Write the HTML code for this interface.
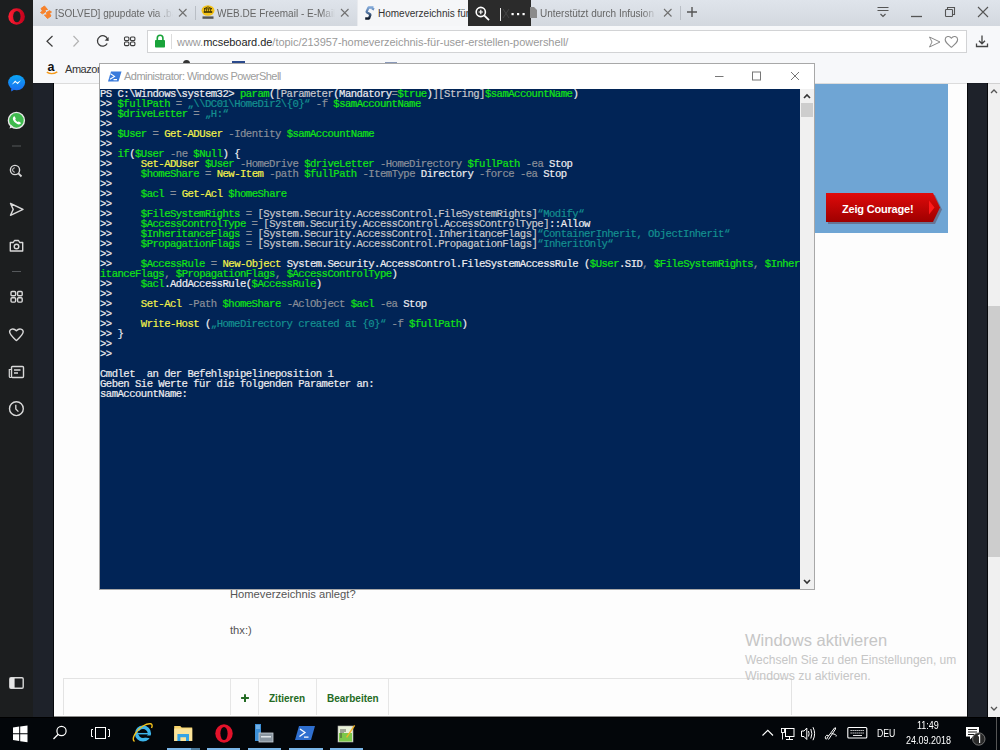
<!DOCTYPE html>
<html><head><meta charset="utf-8">
<style>
*{margin:0;padding:0;box-sizing:border-box}
html,body{width:1000px;height:750px;overflow:hidden;background:#fdfdfd;font-family:"Liberation Sans",sans-serif}
.a{position:absolute}
svg{position:absolute;overflow:visible}
#side{left:0;top:0;width:33px;height:717px;background:#1c1e1f}
#tabs{left:33px;top:0;width:967px;height:26px;background:linear-gradient(#dfe4eb,#d3d8df)}
#toolbar{left:33px;top:26px;width:967px;height:57px;background:#f7f8fa}
#addr{left:147px;top:30px;width:820px;height:23px;background:#fff;border:1px solid #d2d3d5}
.tt{position:absolute;font-size:10px;color:#666;white-space:nowrap;overflow:hidden;top:8px;line-height:12px}
#page{left:54px;top:83px;width:913px;height:634px;background:#fdfdfd}
#stripL{left:33px;top:83px;width:21px;height:634px;background:#1e222a;border-right:1px solid #07090c}
#stripR{left:967px;top:83px;width:21px;height:634px;background:#1e222a;border-left:1px solid #07090c;border-right:1px solid #07090c}
#vscroll{left:988px;top:83px;width:12px;height:634px;background:#f0f0f0}
#taskbar{left:0;top:717px;width:1000px;height:33px;background:linear-gradient(#000 0,#000 1px,#03060a 1px)}
#ps{left:99px;top:63px;width:716px;height:527px;border:1px solid #a8a8a8;background:#fff}
#con{left:0;top:25px;width:700px;height:500px;background:#012456;overflow:hidden}
.ln{position:absolute;left:0;white-space:pre;font-family:"Liberation Mono",monospace;font-size:10.6px;letter-spacing:-0.527px;line-height:10px;-webkit-text-stroke:0.2px currentColor;height:10px;color:#eeedf0}
.g{color:#13e413}.y{color:#f2f24a}.d{color:#8a8f99}.c{color:#149090}.t{color:#c8c8cc}
.btn{position:absolute;top:693px;font-size:10px;font-weight:bold;color:#246b24;line-height:12px}
.wm{position:absolute;left:745px;color:#c6c6c6;white-space:nowrap}
.tray{position:absolute;color:#fff;font-size:10px;white-space:nowrap;line-height:10px}
</style></head><body>
<!-- Opera sidebar -->
<div id="side" class="a"></div>
<svg width="33" height="717" style="left:0;top:0">
  <!-- opera logo -->
  <defs><linearGradient id="og" x1="0" y1="0" x2="1" y2="0"><stop offset="0" stop-color="#ff1f33"/><stop offset="1" stop-color="#c2001b"/></linearGradient></defs>
  <ellipse cx="16.6" cy="16.5" rx="8.3" ry="8.3" fill="url(#og)"/>
  <ellipse cx="16.85" cy="16.6" rx="3.7" ry="5.7" fill="#1c1e1f"/>
  <!-- messenger -->
  <defs><linearGradient id="mg" x1="0" y1="0" x2="0" y2="1"><stop offset="0" stop-color="#0aa6f6"/><stop offset="1" stop-color="#1a6ff0"/></linearGradient></defs>
  <ellipse cx="16.6" cy="82.6" rx="8.5" ry="7.6" fill="url(#mg)"/>
  <path d="M11 88.5 L11.3 91.6 L14.5 89.6Z" fill="#1a6ff0"/>
  <path d="M11.6 84.8 L15.2 80.6 L17.2 82.6 L21 80.2 L17.6 84.2 L15.6 82.3Z" fill="#fff"/>
  <!-- whatsapp -->
  <circle cx="16.4" cy="120.4" r="8" fill="#3fba4e" stroke="#e9e9e9" stroke-width="1.4"/>
  <path d="M9.5 128.6 L10.8 124.5 L13.5 127Z" fill="#e9e9e9"/>
  <path d="M13.5 116.8 q0.8 -1 1.4 0 l0.8 1.6 q0.2 0.6 -0.5 1.1 q0.8 1.8 2.6 2.6 q0.5 -0.7 1.1 -0.5 l1.6 0.8 q1 0.6 0 1.4 q-1.6 1.4 -4 -0.2 q-2.4 -1.6 -3.4 -3.6 q-0.8 -1.8 0.4 -3.2Z" fill="#fff"/>
  <!-- separators -->
  <rect x="12" y="145.5" width="9" height="1" fill="#55585b"/>
  <rect x="12" y="271" width="9" height="1" fill="#55585b"/>
  <g fill="none" stroke="#d9d9d9" stroke-width="1.4">
    <!-- search -->
    <circle cx="15" cy="170" r="4.6"/>
    <path d="M18.4 173.4 L21.5 176.5" stroke-width="1.8"/>
    <path d="M14.8 167.8 a2.2 2.2 0 0 0 0 4.4" stroke-width="1"/>
    <!-- send -->
    <path d="M10.5 203.5 L23 209.4 L10.5 215.3 L13.2 209.4Z" stroke-linejoin="round"/>
    <!-- camera -->
    <path d="M10.3 242.5 h3 l1.2 -2 h4 l1.2 2 h3 v8.5 h-12.4Z" stroke-linejoin="round"/>
    <circle cx="16.5" cy="246.5" r="2.3"/>
    <!-- grid -->
    <rect x="11" y="291.5" width="4.6" height="4.3" rx="1"/>
    <rect x="17.6" y="291.5" width="4.6" height="4.3" rx="1"/>
    <rect x="11" y="297.8" width="4.6" height="4.3" rx="1"/>
    <rect x="17.6" y="297.8" width="4.6" height="4.3" rx="1"/>
    <!-- heart -->
    <path d="M16.4 340.6 C12 336.5 9.6 334.5 9.6 331.8 C9.6 329.2 13.5 327.6 16.4 330.8 C19.3 327.6 23.2 329.2 23.2 331.8 C23.2 334.5 20.8 336.5 16.4 340.6Z" stroke-linejoin="round"/>
    <!-- news -->
    <rect x="11.5" y="366.5" width="12" height="11" rx="1"/>
    <path d="M11.5 369.5 h-2.2 v7 q0 1 1 1 h1.2" stroke-width="1.2"/>
    <path d="M14 370 h6.5 M14 373 h4" stroke-width="1.5"/>
    <!-- clock -->
    <circle cx="16.4" cy="408.7" r="6.9"/>
    <path d="M15.8 404.8 v4.2 l2.6 2.6" stroke-width="1.3"/>
    <!-- sidebar toggle -->
    <rect x="9.8" y="677.8" width="13.4" height="10.4" rx="1.2"/>
  </g>
  <rect x="10" y="678" width="4.6" height="10" fill="#e6e6e6"/>
</svg>

<!-- Tab strip -->
<div id="tabs" class="a"></div>
<!-- tab1 -->
<svg width="16" height="18" style="left:38px;top:3px">
  <path d="M3 5.5 L6.5 3 L9.5 6.5 L7 6.5 L7.5 9 L4.5 10.8 L2.5 9.5 L4.5 8Z" fill="#f7822b" stroke="#f7822b" stroke-width="1" stroke-linejoin="round"/>
  <path d="M13 13 L9.5 15.5 L6.5 12 L9 12 L8.5 9.5 L11.5 7.7 L13.5 9 L11.5 10.5Z" fill="#f7822b" stroke="#f7822b" stroke-width="1" stroke-linejoin="round"/>
</svg>
<div class="tt" style="left:55px;width:118px;-webkit-mask-image:linear-gradient(90deg,#000 85%,transparent)">[SOLVED] gpupdate via .bat</div>
<svg width="10" height="10" style="left:178px;top:8px"><path d="M1 1 L8.5 8.5 M8.5 1 L1 8.5" stroke="#707070" stroke-width="1.1"/></svg>
<div class="a" style="left:195px;top:6px;width:1px;height:14px;background:#b9bec5"></div>
<!-- tab2 -->
<svg width="14" height="14" style="left:201px;top:5px">
  <ellipse cx="7" cy="5.5" rx="6.5" ry="5.2" fill="#f4c318"/>
  <path d="M3 7.5 h8 v-1 h-8Z M3.6 3.6 v3 M5.6 3.6 v3 M7.6 3.6 v3 M9.6 3.6 v3 M3 3.8 L7 1.8 L11 3.8Z" stroke="#3a3000" stroke-width="0.8" fill="none"/>
  <rect x="1.5" y="11.4" width="11" height="2.4" fill="#333" opacity="0.8"/>
</svg>
<div class="tt" style="left:217px;width:118px;-webkit-mask-image:linear-gradient(90deg,#000 88%,transparent)">WEB.DE Freemail - E-Mail</div>
<svg width="10" height="10" style="left:340px;top:8px"><path d="M1 1 L8.5 8.5 M8.5 1 L1 8.5" stroke="#707070" stroke-width="1.1"/></svg>
<!-- active tab3 -->
<div class="a" style="left:357px;top:0;width:174px;height:27px;background:#f5f6f8;border-left:1px solid #e8eaee"></div>
<svg width="14" height="18" style="left:362px;top:3px">
  <defs><linearGradient id="sg" x1="0" y1="0" x2="0" y2="1"><stop offset="0" stop-color="#7fa6d6"/><stop offset="0.5" stop-color="#4d6f9a"/><stop offset="1" stop-color="#0f1a2a"/></linearGradient></defs>
  <path d="M11.5 4.5 L6.5 4.5 L4.5 9 L8.5 11.5 L7 15.5 L3.2 15.5 M11.5 4.5 L10.6 7" stroke="url(#sg)" stroke-width="2.3" fill="none" stroke-linejoin="bevel"/>
</svg>
<div class="tt" style="left:378px;width:95px;color:#333">Homeverzeichnis für</div>
<!-- dark zoom popup -->
<div class="a" style="left:468px;top:0;width:63px;height:27px;background:#2b2b2b"></div>
<svg width="63" height="27" style="left:468px;top:0">
  <circle cx="12.8" cy="12" r="4.6" fill="none" stroke="#fff" stroke-width="1.6"/>
  <path d="M16.2 15.4 L21 20.2" stroke="#fff" stroke-width="1.8"/>
  <path d="M12.8 9.8 v4.4 M10.6 12 h4.4" stroke="#fff" stroke-width="1.2"/>
  <rect x="32" y="8" width="1" height="13" fill="#e8e8e8"/>
  <path d="M35 9 L41 18 M41 9 L35 18" stroke="#444" stroke-width="1"/>
  <rect x="43.5" y="13" width="2.2" height="2.2" fill="#fff"/>
  <rect x="49" y="13" width="2.2" height="2.2" fill="#fff"/>
  <rect x="54.5" y="13" width="2.2" height="2.2" fill="#fff"/>
</svg>
<!-- tab4 -->
<svg width="8" height="12" style="left:530px;top:7px"><path d="M0 0 h4 l3 3 v8 h-7Z" fill="#8a8a8a"/></svg>
<div class="tt" style="left:540px;width:117px;-webkit-mask-image:linear-gradient(90deg,#000 88%,transparent)">Unterstützt durch Infusion</div>
<svg width="10" height="10" style="left:663px;top:8px"><path d="M1 1 L8.5 8.5 M8.5 1 L1 8.5" stroke="#707070" stroke-width="1.1"/></svg>
<div class="a" style="left:680px;top:6px;width:1px;height:14px;background:#b9bec5"></div>
<svg width="12" height="12" style="left:686px;top:6px"><path d="M6 1 v10 M1 6 h10" stroke="#555" stroke-width="1.4"/></svg>
<!-- window controls -->
<svg width="123" height="26" style="left:877px;top:0">
  <path d="M0.5 7.5 h11 M0.5 10.5 h11 M3.5 14 L6 16.5 L8.5 14" stroke="#555" stroke-width="1.2" fill="none"/>
  <path d="M34 16.5 h11" stroke="#555" stroke-width="1.3"/>
  <rect x="68.5" y="9.5" width="7" height="7" rx="0.8" fill="none" stroke="#555" stroke-width="1.1"/>
  <path d="M70.5 9.5 v-2 h7 v7 h-2" fill="none" stroke="#555" stroke-width="1.1"/>
  <path d="M101 7 L111 17 M111 7 L101 17" stroke="#555" stroke-width="1.1"/>
</svg>

<!-- Toolbar -->
<div id="toolbar" class="a"></div>
<svg width="110" height="26" style="left:36px;top:28px">
  <path d="M16.5 8 L11 13.2 L16.5 18.5" stroke="#3c3c3c" stroke-width="1.2" fill="none"/>
  <path d="M37.5 8 L42.5 13.2 L37.5 18.5" stroke="#b2b2b2" stroke-width="1.2" fill="none"/>
  <path d="M71.5 11 A5.2 5.2 0 1 0 71.2 15.5" stroke="#3c3c3c" stroke-width="1.3" fill="none"/>
  <path d="M72.6 9 L72.6 13 L68.6 12.4Z" fill="#3c3c3c"/>
  <rect x="88.5" y="9" width="4.4" height="3.6" rx="1" fill="none" stroke="#3c3c3c" stroke-width="1.1"/>
  <rect x="94.5" y="9" width="4.4" height="3.6" rx="1" fill="none" stroke="#3c3c3c" stroke-width="1.1"/>
  <rect x="88.5" y="14" width="4.4" height="3.6" rx="1" fill="none" stroke="#3c3c3c" stroke-width="1.1"/>
  <rect x="94.5" y="14" width="4.4" height="3.6" rx="1" fill="none" stroke="#3c3c3c" stroke-width="1.1"/>
</svg>
<div id="addr" class="a"></div>
<svg width="30" height="20" style="left:150px;top:33px">
  <path d="M7.3 7 v-2 a2.8 2.8 0 0 1 5.6 0 v2" stroke="#19a33a" stroke-width="1.6" fill="none"/>
  <rect x="5" y="7" width="10" height="7.6" rx="0.8" fill="#19a33a"/>
  <rect x="21" y="1" width="1" height="15" fill="#dcdcdc"/>
</svg>
<div class="a" style="left:177px;top:35px;font-size:11px;letter-spacing:-0.04px;color:#9a9a9a;white-space:nowrap;line-height:14px">www.<span style="color:#1e1e1e">mcseboard.de</span>/topic/213957-homeverzeichnis-für-user-erstellen-powershell/</div>
<svg width="40" height="20" style="left:927px;top:33px">
  <path d="M2.5 4 L13 9 L2.5 14 L5 9Z" stroke="#8a8a8a" stroke-width="1" fill="none" stroke-linejoin="round"/>
  <path d="M24.4 14.3 C20 10.5 18 9 18.2 6.2 C18.4 3.4 22.5 2.2 24.4 5.2 C26.3 2.2 30.4 3.4 30.6 6.2 C30.8 9 28.8 10.5 24.4 14.3Z" stroke="#8a8a8a" stroke-width="1.1" fill="none" stroke-linejoin="round"/>
</svg>
<svg width="16" height="16" style="left:975px;top:34px">
  <path d="M7 1.5 v8 M4 6.8 L7 9.8 L10 6.8 M1.5 9.5 v3 h11 v-3" stroke="#444" stroke-width="1.3" fill="none"/>
</svg>
<!-- bookmarks -->
<svg width="16" height="16" style="left:45px;top:61px">
  <text x="2.6" y="10" font-family="Liberation Sans" font-weight="bold" font-size="12.5" fill="#111">a</text>
  <path d="M1.8 11.2 q5 3 10.5 -0.3" stroke="#f59b1b" stroke-width="1.4" fill="none"/>
</svg>
<div class="a" style="left:65px;top:62px;font-size:11px;letter-spacing:-0.45px;color:#333;line-height:14px">Amazon</div>
<div class="a" style="left:183px;top:60px;width:7px;height:4px;border-radius:4px 4px 0 0;background:#333"></div>
<div class="a" style="left:232px;top:61px;width:13px;height:3px;background:#2b4a8c"></div>
<div class="a" style="left:385px;top:62px;width:12px;height:2px;background:#8a99b8"></div>

<!-- page -->
<div id="stripL" class="a"></div>
<div id="page" class="a"></div>
<div id="stripR" class="a"></div>
<div id="vscroll" class="a"></div>
<svg width="12" height="634" style="left:988px;top:83px">
  <path d="M3 10 L6 7 L9 10" stroke="#555" stroke-width="1.3" fill="none"/>
  <rect x="0" y="223" width="12" height="251" fill="#cdcdcd"/>
  <path d="M3 624 L6 627 L9 624" stroke="#555" stroke-width="1.3" fill="none"/>
</svg>
<div class="a" style="left:815px;top:84px;width:133px;height:149px;background:#6fa5d4"></div>
<div class="a" style="left:33px;top:83px;width:967px;height:1px;background:rgba(0,0,0,0.13)"></div>
<svg width="120" height="34" style="left:824px;top:192px">
  <defs><linearGradient id="rg" x1="0" y1="0" x2="0" y2="1"><stop offset="0" stop-color="#e00a0a"/><stop offset="1" stop-color="#9e0000"/></linearGradient></defs>
  <path d="M3 1 H110 L117 15.5 L110 30 H3Z" fill="#5a1a1a" opacity="0.35" transform="translate(1,2)"/>
  <path d="M2 1 H109 L116 15.5 L109 30 H2Z" fill="url(#rg)"/>
  <path d="M105 8.5 L110.5 15.5 L105 22.5Z" fill="#ff1a1a"/>
</svg>
<div class="a" style="left:842px;top:201.5px;font-size:11px;font-weight:bold;color:#fff;letter-spacing:-0.2px;line-height:14px">Zeig Courage!</div>

<div class="a" style="left:230px;top:587.6px;font-size:11.2px;color:#555;line-height:12px">Homeverzeichnis anlegt?</div>
<div class="a" style="left:230px;top:623.9px;font-size:11.2px;color:#555;line-height:12px">thx:)</div>

<div class="a" style="left:63px;top:678px;width:729px;height:40px;border:1px solid #e3e3e3;border-bottom:none"></div>
<div class="a" style="left:230px;top:679px;width:1px;height:38px;background:#e6e6e6"></div>
<div class="a" style="left:258px;top:679px;width:1px;height:38px;background:#e6e6e6"></div>
<div class="a" style="left:316px;top:679px;width:1px;height:38px;background:#e6e6e6"></div>
<div class="a" style="left:388px;top:679px;width:1px;height:38px;background:#e6e6e6"></div>
<svg width="10" height="10" style="left:240px;top:693px"><path d="M5 1.2 v7.8 M1.1 5.1 h7.8" stroke="#246b24" stroke-width="2"/></svg>
<div class="btn" style="left:269px">Zitieren</div>
<div class="btn" style="left:327px">Bearbeiten</div>

<div class="wm" style="top:630px;font-size:16.5px;line-height:20px">Windows aktivieren</div>
<div class="wm" style="top:652.6px;font-size:12px;line-height:14px">Wechseln Sie zu den Einstellungen, um</div>
<div class="wm" style="top:668.7px;font-size:12.3px;line-height:14px">Windows zu aktivieren.</div>

<!-- taskbar -->
<div class="a" style="left:54px;top:715px;width:913px;height:1px;background:#fff"></div>
<div class="a" style="left:54px;top:716px;width:913px;height:1px;background:#8c8c8c"></div>
<div id="taskbar" class="a"></div>
<svg width="1000" height="33" style="left:0;top:717px">
  <!-- windows logo -->
  <path d="M13 10.5 L19.2 9.6 V16.3 H13Z M20.2 9.4 L27.5 8.4 V16.3 H20.2Z M13 17.3 H19.2 V24 L13 23.1Z M20.2 17.3 H27.5 V25.2 L20.2 24.2Z" fill="#fff"/>
  <!-- search -->
  <circle cx="61.5" cy="14" r="4.6" fill="none" stroke="#fff" stroke-width="1.2"/>
  <path d="M58.2 17.3 L53.5 22" stroke="#fff" stroke-width="1.3"/>
  <!-- task view -->
  <rect x="95.5" y="10.5" width="10" height="11" fill="none" stroke="#fff" stroke-width="1"/>
  <path d="M93 12.5 h-1.5 v7 h1.5 M108 12.5 h1.5 v7 h-1.5" stroke="#fff" stroke-width="1" fill="none"/>
  <!-- IE -->
  <circle cx="143" cy="16.5" r="6.3" fill="none" stroke="#3cb4ea" stroke-width="3.6"/>
  <rect x="138" y="15.6" width="10" height="2" fill="#03060a"/>
  <rect x="137" y="15.8" width="12" height="1.6" fill="#3cb4ea"/>
  <rect x="137.6" y="14.2" width="9.5" height="1.6" fill="#03060a"/>
  <path d="M145 18.5 L151.5 18.5 L151.5 21.5 L145 20.5Z" fill="#03060a"/>
  <path d="M134.5 24.5 C131 22 136 13 143 9 C149 5.5 154 6 151.5 11" stroke="#f3c01a" stroke-width="1.4" fill="none"/>
  <!-- folder -->
  <path d="M174.2 9 h6 l1.5 1.5 h10.5 v13.5 h-18Z" fill="#f7d36b"/>
  <rect x="174.2" y="11.5" width="18" height="12.5" fill="#fbe39a"/>
  <path d="M177.4 17 h11.6 v7 h-3 v-3.8 h-5.6 v3.8 h-3Z" fill="#35a4e6"/>
  <!-- opera -->
  <ellipse cx="224" cy="16.5" rx="8.7" ry="9.2" fill="#e2122a"/>
  <ellipse cx="224" cy="16.5" rx="3.6" ry="6.6" fill="#03060a"/>
  <!-- server manager -->
  <rect x="255" y="7" width="6" height="17" fill="#3d8fd6"/>
  <path d="M256 9 h4 M256 11 h4" stroke="#bfe0ff" stroke-width="0.8"/>
  <rect x="259" y="16" width="14" height="9" fill="#8a96a0" stroke="#c8d0d8" stroke-width="0.8"/>
  <rect x="261" y="19" width="10" height="1.5" fill="#e0e6ea"/>
  <!-- powershell -->
  <path d="M299 9 H315 L311 23 H295Z" fill="#2f6fcf"/>
  <path d="M300 12 L305 15.5 L299.5 19.5 M304 20.2 H308.5" stroke="#fff" stroke-width="1.3" fill="none"/>
  <!-- notepad++ -->
  <rect x="338" y="9" width="15" height="16" fill="#e8f0d8" stroke="#aaa" stroke-width="0.6"/>
  <rect x="339" y="16" width="13" height="8.5" fill="#7cc84a"/>
  <path d="M341 12 v9 M343 12 v4 M345 12 v3" stroke="#333" stroke-width="0.8"/>
  <path d="M346 20 L354 8 l1.2 0.8 L347.2 20.8Z" fill="#f2b32a"/>
  <!-- running underlines -->
  <rect x="167" y="31" width="33" height="2" fill="#7ab6e8"/>
  <rect x="191" y="31" width="9" height="2" fill="#4d7c9e"/>
  <rect x="207" y="31" width="33" height="2" fill="#7ab6e8"/>
  <rect x="248" y="31" width="33" height="2" fill="#7ab6e8"/>
  <rect x="289" y="31" width="34" height="2" fill="#7ab6e8"/>
  <rect x="330" y="31" width="33" height="2" fill="#7ab6e8"/>
  <!-- tray -->
  <path d="M762.5 18.5 L767.8 13.3 L773 18.5" stroke="#fff" stroke-width="1.1" fill="none"/>
  <rect x="785.5" y="11.5" width="8.5" height="8" fill="none" stroke="#fff" stroke-width="1"/>
  <path d="M789.5 20 v2 M786 22.5 h7" stroke="#fff" stroke-width="1"/>
  <rect x="781.5" y="11.5" width="3" height="4" fill="none" stroke="#fff" stroke-width="0.9"/>
  <path d="M782.5 15.5 v7" stroke="#fff" stroke-width="0.9"/>
  <path d="M801.5 14 h2.5 l2.8 -3 v11.5 l-2.8 -3 h-2.5Z" fill="none" stroke="#fff" stroke-width="1"/>
  <path d="M808.5 14 q1.2 2.8 0 5.5 M810.8 12 q2.2 4.8 0 9.5 M813 10.2 q3.2 6.5 0 13" stroke="#fff" stroke-width="1" fill="none"/>
  <path d="M827 21 L834.5 11 q1.5 -1 1 1 L828.5 22.5" stroke="#fff" stroke-width="1" fill="none"/>
  <path d="M827.5 21.5 q-3 1.5 -2 -2 q1 -2 3 -1 M831.5 16.5 q6 1 4.5 3" stroke="#fff" stroke-width="1" fill="none"/>
  <rect x="847.8" y="10.5" width="19" height="10.5" rx="1" fill="none" stroke="#fff" stroke-width="1.1"/>
  <path d="M850.5 13.5 h14 M850.5 16 h14" stroke="#fff" stroke-width="0.9" stroke-dasharray="1.3 0.7"/>
  <path d="M853 18.5 h9" stroke="#fff" stroke-width="0.9"/>
  <!-- notification -->
  <path d="M966 10 h13 v9.5 h-6 l-3 3 v-3 h-4Z" fill="#fff"/>
  <path d="M968 12.5 h9 M968 15 h9 M968 17.5 h6" stroke="#060606" stroke-width="0.9"/>
  <circle cx="978.8" cy="22" r="6.2" fill="#2a2a2a" stroke="#888" stroke-width="0.8"/>
  <path d="M978 19 l1.6 -1 v8" stroke="#fff" stroke-width="1.2" fill="none"/>
  <rect x="996" y="0" width="1" height="33" fill="#555"/>
</svg>
<div class="tray" style="left:877px;top:728.8px;font-size:10px;transform:scaleX(0.87);transform-origin:0 0">DEU</div>
<div class="tray" style="left:917.4px;top:721.4px;font-size:10px;transform:scaleX(0.9);transform-origin:0 0">11:49</div>
<div class="tray" style="left:906px;top:736.3px;font-size:10px;transform:scaleX(0.897);transform-origin:0 0">24.09.2018</div>

<!-- PowerShell window -->
<div id="ps" class="a">
  <svg width="16" height="14" style="left:7px;top:7px">
    <path d="M4 0.5 H14.5 L11.5 10.5 H1Z" fill="#3a7bdc"/>
    <path d="M3.5 2.8 L7.5 5.4 L3 8.2 M6.5 8.6 H10" stroke="#fff" stroke-width="1.1" fill="none"/>
  </svg>
  <div class="a" style="left:24px;top:5px;font-size:11px;letter-spacing:-0.53px;color:#9d9d9d;line-height:14px;white-space:nowrap">Administrator: Windows PowerShell</div>
  <svg width="110" height="24" style="left:600px;top:0">
    <path d="M15 12.5 h8.5" stroke="#777" stroke-width="1"/>
    <rect x="52.5" y="8" width="8" height="8" fill="none" stroke="#777" stroke-width="1"/>
    <path d="M91 8 L99 16 M99 8 L91 16" stroke="#777" stroke-width="1"/>
  </svg>
  <div id="con" class="a">
<div class="ln" style="top:0px">PS C:\Windows\system32&gt; <span class="g">param</span>(<span class="t">[Parameter</span>(Mandatory<span class="d">=</span><span class="g">$true</span>)<span class="t">]</span><span class="t">[String]</span><span class="g">$samAccountName</span>)</div>
<div class="ln" style="top:10px">&gt;&gt; <span class="g">$fullPath</span> <span class="d">=</span> <span class="c">„\\DC01\HomeDir2\{0}“</span> <span class="d">-f</span> <span class="g">$samAccountName</span></div>
<div class="ln" style="top:20px">&gt;&gt; <span class="g">$driveLetter</span> <span class="d">=</span> <span class="c">„H:“</span></div>
<div class="ln" style="top:30px">&gt;&gt;</div>
<div class="ln" style="top:40px">&gt;&gt; <span class="g">$User</span> <span class="d">=</span> <span class="y">Get-ADUser</span> <span class="d">-Identity</span> <span class="g">$samAccountName</span></div>
<div class="ln" style="top:50px">&gt;&gt;</div>
<div class="ln" style="top:60px">&gt;&gt; <span class="g">if</span>(<span class="g">$User</span> <span class="d">-ne</span> <span class="g">$Null</span>) {</div>
<div class="ln" style="top:70px">&gt;&gt;     <span class="y">Set-ADUser</span> <span class="g">$User</span> <span class="d">-HomeDrive</span> <span class="g">$driveLetter</span> <span class="d">-HomeDirectory</span> <span class="g">$fullPath</span> <span class="d">-ea</span> Stop</div>
<div class="ln" style="top:80px">&gt;&gt;     <span class="g">$homeShare</span> <span class="d">=</span> <span class="y">New-Item</span> <span class="d">-path</span> <span class="g">$fullPath</span> <span class="d">-ItemType</span> Directory <span class="d">-force</span> <span class="d">-ea</span> Stop</div>
<div class="ln" style="top:90px">&gt;&gt;</div>
<div class="ln" style="top:100px">&gt;&gt;     <span class="g">$acl</span> <span class="d">=</span> <span class="y">Get-Acl</span> <span class="g">$homeShare</span></div>
<div class="ln" style="top:110px">&gt;&gt;</div>
<div class="ln" style="top:120px">&gt;&gt;     <span class="g">$FileSystemRights</span> <span class="d">=</span> <span class="t">[System.Security.AccessControl.FileSystemRights]</span><span class="c">“Modify“</span></div>
<div class="ln" style="top:130px">&gt;&gt;     <span class="g">$AccessControlType</span> <span class="d">=</span> <span class="t">[System.Security.AccessControl.AccessControlType]</span>::Allow</div>
<div class="ln" style="top:140px">&gt;&gt;     <span class="g">$InheritanceFlags</span> <span class="d">=</span> <span class="t">[System.Security.AccessControl.InheritanceFlags]</span><span class="c">“ContainerInherit, ObjectInherit“</span></div>
<div class="ln" style="top:150px">&gt;&gt;     <span class="g">$PropagationFlags</span> <span class="d">=</span> <span class="t">[System.Security.AccessControl.PropagationFlags]</span><span class="c">“InheritOnly“</span></div>
<div class="ln" style="top:160px">&gt;&gt;</div>
<div class="ln" style="top:170px">&gt;&gt;     <span class="g">$AccessRule</span> <span class="d">=</span> <span class="y">New-Object</span> System.Security.AccessControl.FileSystemAccessRule (<span class="g">$User</span>.SID<span class="d">,</span> <span class="g">$FileSystemRights</span><span class="d">,</span> <span class="g">$Inher</span></div>
<div class="ln" style="top:180px"><span class="g">itanceFlags</span><span class="d">,</span> <span class="g">$PropagationFlags</span><span class="d">,</span> <span class="g">$AccessControlType</span>)</div>
<div class="ln" style="top:190px">&gt;&gt;     <span class="g">$acl</span>.AddAccessRule(<span class="g">$AccessRule</span>)</div>
<div class="ln" style="top:200px">&gt;&gt;</div>
<div class="ln" style="top:210px">&gt;&gt;     <span class="y">Set-Acl</span> <span class="d">-Path</span> <span class="g">$homeShare</span> <span class="d">-AclObject</span> <span class="g">$acl</span> <span class="d">-ea</span> Stop</div>
<div class="ln" style="top:220px">&gt;&gt;</div>
<div class="ln" style="top:230px">&gt;&gt;     <span class="y">Write-Host</span> (<span class="c">„HomeDirectory created at {0}“</span> <span class="d">-f</span> <span class="g">$fullPath</span>)</div>
<div class="ln" style="top:240px">&gt;&gt; }</div>
<div class="ln" style="top:250px">&gt;&gt;</div>
<div class="ln" style="top:260px">&gt;&gt;</div>
<div class="ln" style="top:270px"></div>
<div class="ln" style="top:280px">Cmdlet  an der Befehlspipelineposition 1</div>
<div class="ln" style="top:290px">Geben Sie Werte für die folgenden Parameter an:</div>
<div class="ln" style="top:300px">samAccountName:</div>
  </div>
  <div class="a" style="left:700px;top:25px;width:14px;height:500px;background:#f0f0f0"></div>
  <svg width="14" height="500" style="left:700px;top:25px">
    <path d="M4 9 L7 6 L10 9" stroke="#333" stroke-width="1.6" fill="none"/>
    <rect x="1" y="14" width="12" height="14" fill="#cdcdcd"/>
    <path d="M4 491 L7 494 L10 491" stroke="#333" stroke-width="1.6" fill="none"/>
  </svg>
</div>
</body></html>
